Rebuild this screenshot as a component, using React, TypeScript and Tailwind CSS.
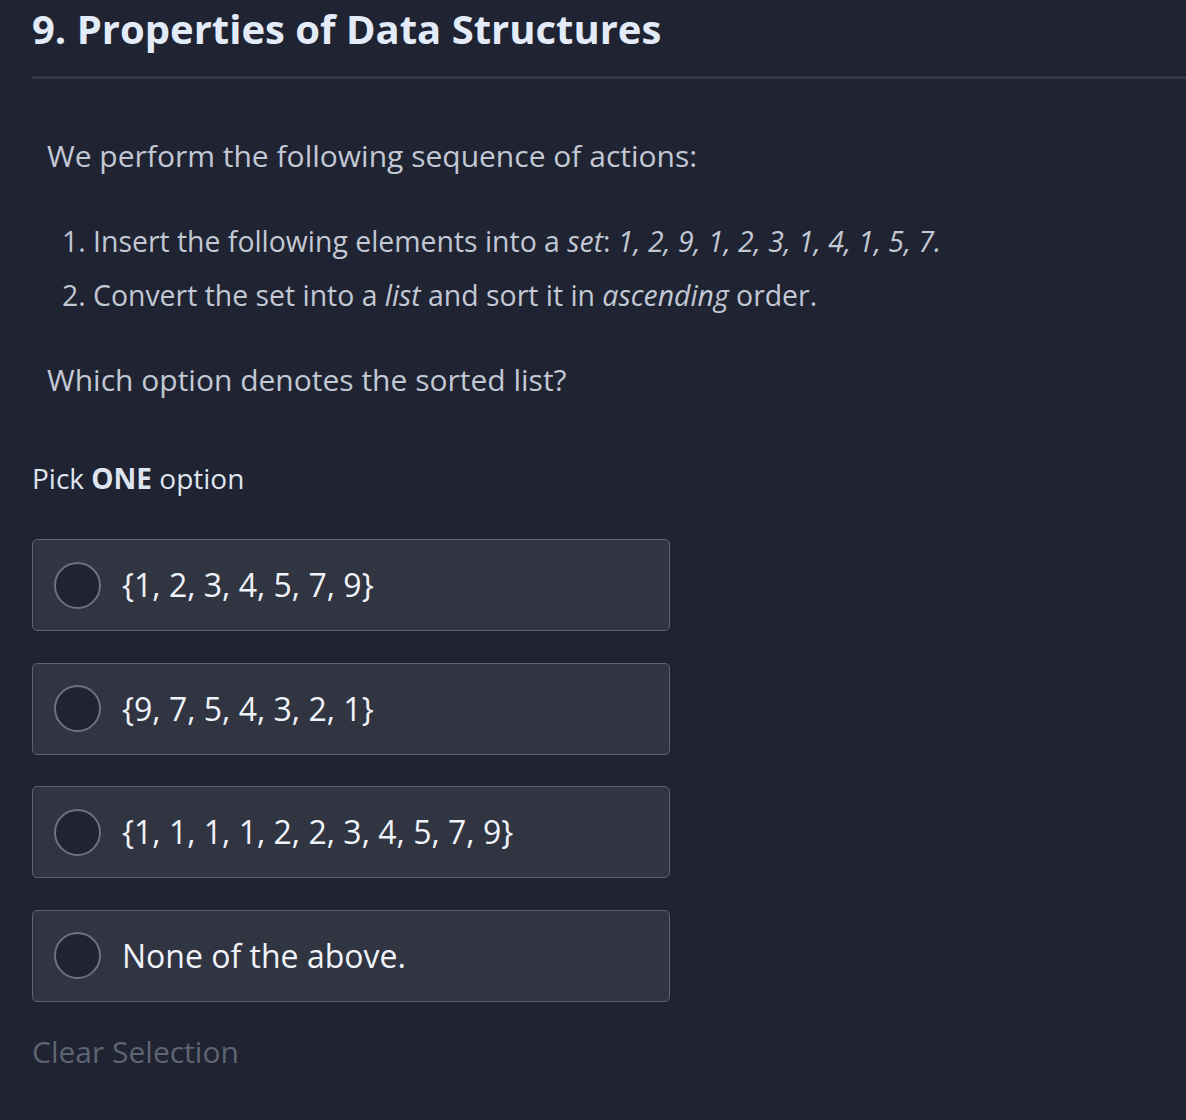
import React from "react";

const options = [
  "{1, 2, 3, 4, 5, 7, 9}",
  "{9, 7, 5, 4, 3, 2, 1}",
  "{1, 1, 1, 1, 2, 2, 3, 4, 5, 7, 9}",
  "None of the above.",
];

const App: React.FC = () => {
  return (
    <div
      className="min-h-[1120px] bg-[#1f2332] pl-8 pt-[5px] pb-10"
      style={{ fontFamily: '"Open Sans", sans-serif' }}
    >
      {/* title */}
      <h1 className="text-[40px] font-bold leading-[48px] text-[#e3ebf9]">
        9. Properties of Data Structures
      </h1>
      <div className="mt-[23px] h-[3px] bg-[#333744]" />

      {/* question body */}
      <div className="pl-[15px] pr-8 text-[#c2c8d4]">
        <p className="mt-[57px] text-[30px] leading-[40px]">
          We perform the following sequence of actions:
        </p>
        <ol className="mt-[45px] space-y-[14px] pl-[15px] text-[28.4px] leading-[40px]">
          <li>
            1. Insert the following elements into a <em>set</em>:{" "}
            <em>1, 2, 9, 1, 2, 3, 1, 4, 1, 5, 7.</em>
          </li>
          <li>
            2. Convert the set into a <em>list</em> and sort it in{" "}
            <em>ascending</em> order.
          </li>
        </ol>
        <p className="mt-[45px] text-[30px] leading-[40px]">
          Which option denotes the sorted list?
        </p>
      </div>

      {/* options */}
      <p className="mt-[58px] text-[28px] leading-[40px] text-[#dfe5f0]">
        Pick <span className="font-bold">ONE</span> option
      </p>
      <div className="mt-[41px] flex w-[638px] flex-col gap-[31.5px]">
        {options.map((opt) => (
          <label
            key={opt}
            className="flex h-[92px] items-center gap-[21px] rounded-[5px] border-[1.5px] border-[#5d6270] bg-[#313542] pl-[21px]"
          >
            <span className="h-[47px] w-[47px] shrink-0 rounded-full border-2 border-[#6c7282] bg-[#1f2332]" />
            <span className="text-[32px] leading-[40px] text-[#f0f3f9]">
              {opt}
            </span>
          </label>
        ))}
      </div>

      <button className="mt-[30px] text-[30px] leading-[40px] text-[#5e6473]">
        Clear Selection
      </button>
    </div>
  );
};

export default App;
